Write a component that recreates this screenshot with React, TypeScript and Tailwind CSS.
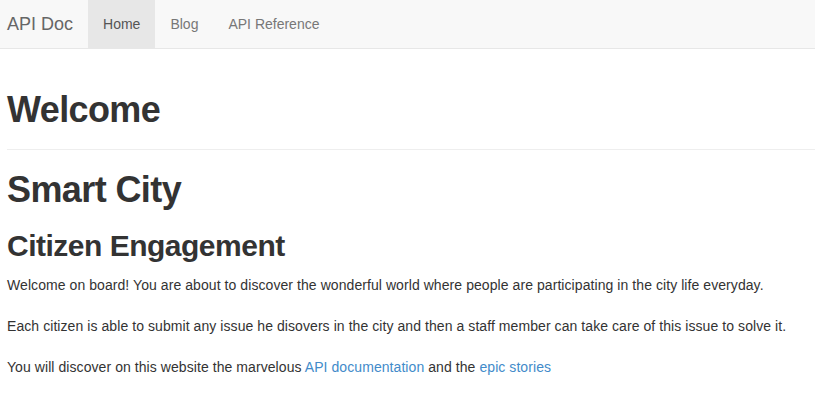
export default function App() {
  const font = { fontFamily: '"Liberation Sans", Arial, sans-serif' };
  return (
    <div className="min-h-screen bg-white text-[#333] text-[14px] leading-[20px]" style={font}>
      <nav className="flex h-[49px] items-stretch border-b border-[#e7e7e7] bg-[#f8f8f8]">
        <a className="flex items-center pl-[7px] pr-[15px] text-[18px] leading-[20px] text-[#666]">API Doc</a>
        <ul className="flex items-stretch">
          <li className="flex items-center bg-[#e7e7e7] px-[15px] text-[#555]">Home</li>
          <li className="flex items-center px-[15px] text-[#777]">Blog</li>
          <li className="flex items-center px-[15px] text-[#777]">API Reference</li>
        </ul>
      </nav>
      <main className="pl-[7px]">
        <div className="mt-[41px] mb-[20px] border-b border-[#eee] pb-[9px]">
          <h1 className="mb-[10px] text-[36px] leading-[39.6px] font-bold tracking-[-0.6px]">Welcome</h1>
        </div>
        <h1 className="mb-[10px] text-[36px] leading-[39.6px] font-bold tracking-[-0.6px]">Smart City</h1>
        <h2 className="mt-[20px] mb-[13px] text-[30px] leading-[33px] font-bold tracking-[-0.5px]">Citizen Engagement</h2>
        <div className="tracking-[0.07px]">
          <p className="mb-[21px]">
            Welcome on board! You are about to discover the wonderful world where people are participating in the city life everyday.
          </p>
          <p className="mb-[21px]">
            Each citizen is able to submit any issue he disovers in the city and then a staff member can take care of this issue to solve it.
          </p>
          <p className="mb-[21px]">
            You will discover on this website the marvelous{" "}
            <a href="#" className="text-[#428bca]">API documentation</a> and the{" "}
            <a href="#" className="text-[#428bca]">epic stories</a>
          </p>
        </div>
      </main>
    </div>
  );
}
